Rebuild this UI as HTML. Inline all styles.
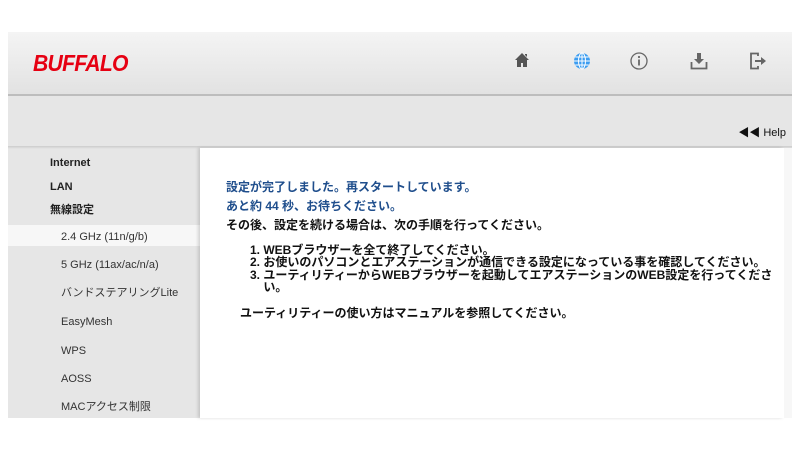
<!DOCTYPE html>
<html><head><meta charset="utf-8"><style>
*{margin:0;padding:0;box-sizing:border-box}
body{width:800px;height:450px;background:#fff;position:relative;overflow:hidden;font-family:"Liberation Sans","Noto Sans CJK JP",sans-serif}
#wrap{position:absolute;left:8px;top:32px;width:784px;height:386px;background:#e6e6e6}
#hdr{position:absolute;left:0;top:0;width:784px;height:64px;background:linear-gradient(#f4f4f4,#e2e2e2);border-bottom:2px solid #bdbdbd}
#logo{position:absolute;left:25px;top:18px;color:#e60012;font:italic bold 23px "Liberation Sans",sans-serif;letter-spacing:-0.8px;transform:scaleX(0.92);transform-origin:left}
.ic{position:absolute;top:20px}
#help{position:absolute;right:6px;top:92px;font-size:11px;color:#111}
#bar{position:absolute;left:0;top:114px;width:784px;height:3px;background:linear-gradient(#ccc,#e6e6e6)}
#sel{position:absolute;left:0;top:193px;width:192px;height:21px;background:#f7f7f7}
.s{position:absolute;font-size:11px;line-height:14px;height:14px;color:#222;white-space:nowrap}
.b{font-weight:bold;left:42px}
.sub{left:53px;color:#333}
#main{position:absolute;left:192px;top:116px;width:584px;height:270px;background:#fff;box-shadow:-2px 0 3px rgba(0,0,0,.15)}
#strip{position:absolute;left:776px;top:116px;width:8px;height:270px;background:#f7f7f7}
.t{position:absolute;font-size:12px;line-height:14px;white-space:nowrap;color:#111;font-weight:bold}
.bl{color:#1f4e8c}
ol{position:absolute;left:50px;top:96px;font-size:12px;line-height:12.3px;color:#111;padding-left:0;list-style:none;font-weight:bold;white-space:nowrap}
</style></head><body>
<div id="wrap">
<div id="hdr">
<div id="logo">BUFFALO</div>
<svg class="ic" style="left:506px" width="16" height="16" viewBox="0 0 16 16"><path d="M8 1L1 8h2v7h4v-4h2v4h4V8h2L8 1z M11 2h2v3l-2-2z" fill="#555"/></svg>
<svg class="ic" style="left:565px" width="18" height="18" viewBox="0 0 18 18"><circle cx="9" cy="9" r="8" fill="#3b9cf0"/><g stroke="#fff" stroke-width="1" fill="none"><ellipse cx="9" cy="9" rx="3.5" ry="8"/><path d="M9 1v16M1 9h16M2.2 5h13.6M2.2 13h13.6"/></g></svg>
<svg class="ic" style="left:622px" width="18" height="18" viewBox="0 0 18 18"><circle cx="9" cy="9" r="8" fill="none" stroke="#666" stroke-width="1.3"/><circle cx="9" cy="5" r="1.1" fill="#666"/><path d="M9 7.5v6" stroke="#666" stroke-width="1.8"/></svg>
<svg class="ic" style="left:682px" width="18" height="18" viewBox="0 0 18 18"><path d="M7 1h4v6h3l-5 5-5-5h3z" fill="#666"/><path d="M1.5 10v6.5h15V10" fill="none" stroke="#666" stroke-width="1.8"/></svg>
<svg class="ic" style="left:741px" width="18" height="18" viewBox="0 0 18 18"><path d="M9 4V1.5H2v15h7V14" fill="none" stroke="#666" stroke-width="1.8"/><path d="M6 8h6V5l5 4-5 4v-3H6z" fill="#666"/></svg>
</div>
<div id="help">◀◀ Help</div>
<div id="bar"></div>
<div id="sel"></div>
<div class="s b" style="top:124px">Internet</div>
<div class="s b" style="top:148px">LAN</div>
<div class="s b" style="top:171px">無線設定</div>
<div class="s sub" style="top:198px">2.4 GHz (11n/g/b)</div>
<div class="s sub" style="top:226px">5 GHz (11ax/ac/n/a)</div>
<div class="s sub" style="top:254px">バンドステアリングLite</div>
<div class="s sub" style="top:283px">EasyMesh</div>
<div class="s sub" style="top:312px">WPS</div>
<div class="s sub" style="top:340px">AOSS</div>
<div class="s sub" style="top:368px">MACアクセス制限</div>
<div id="main">
<div class="t bl" style="left:26px;top:32px">設定が完了しました。再スタートしています。</div>
<div class="t bl" style="left:26px;top:51px">あと約 44 秒、お待ちください。</div>
<div class="t" style="left:26px;top:70px">その後、設定を続ける場合は、次の手順を行ってください。</div>
<ol>
<li>1. WEBブラウザーを全て終了してください。</li>
<li>2. お使いのパソコンとエアステーションが通信できる設定になっている事を確認してください。</li>
<li>3. ユーティリティーからWEBブラウザーを起動してエアステーションのWEB設定を行ってくださ<br>&nbsp;&nbsp;&nbsp;&nbsp;い。</li>
</ol>
<div class="t" style="left:40px;top:158px">ユーティリティーの使い方はマニュアルを参照してください。</div>
</div>
<div id="strip"></div>
</div>
</body></html>
